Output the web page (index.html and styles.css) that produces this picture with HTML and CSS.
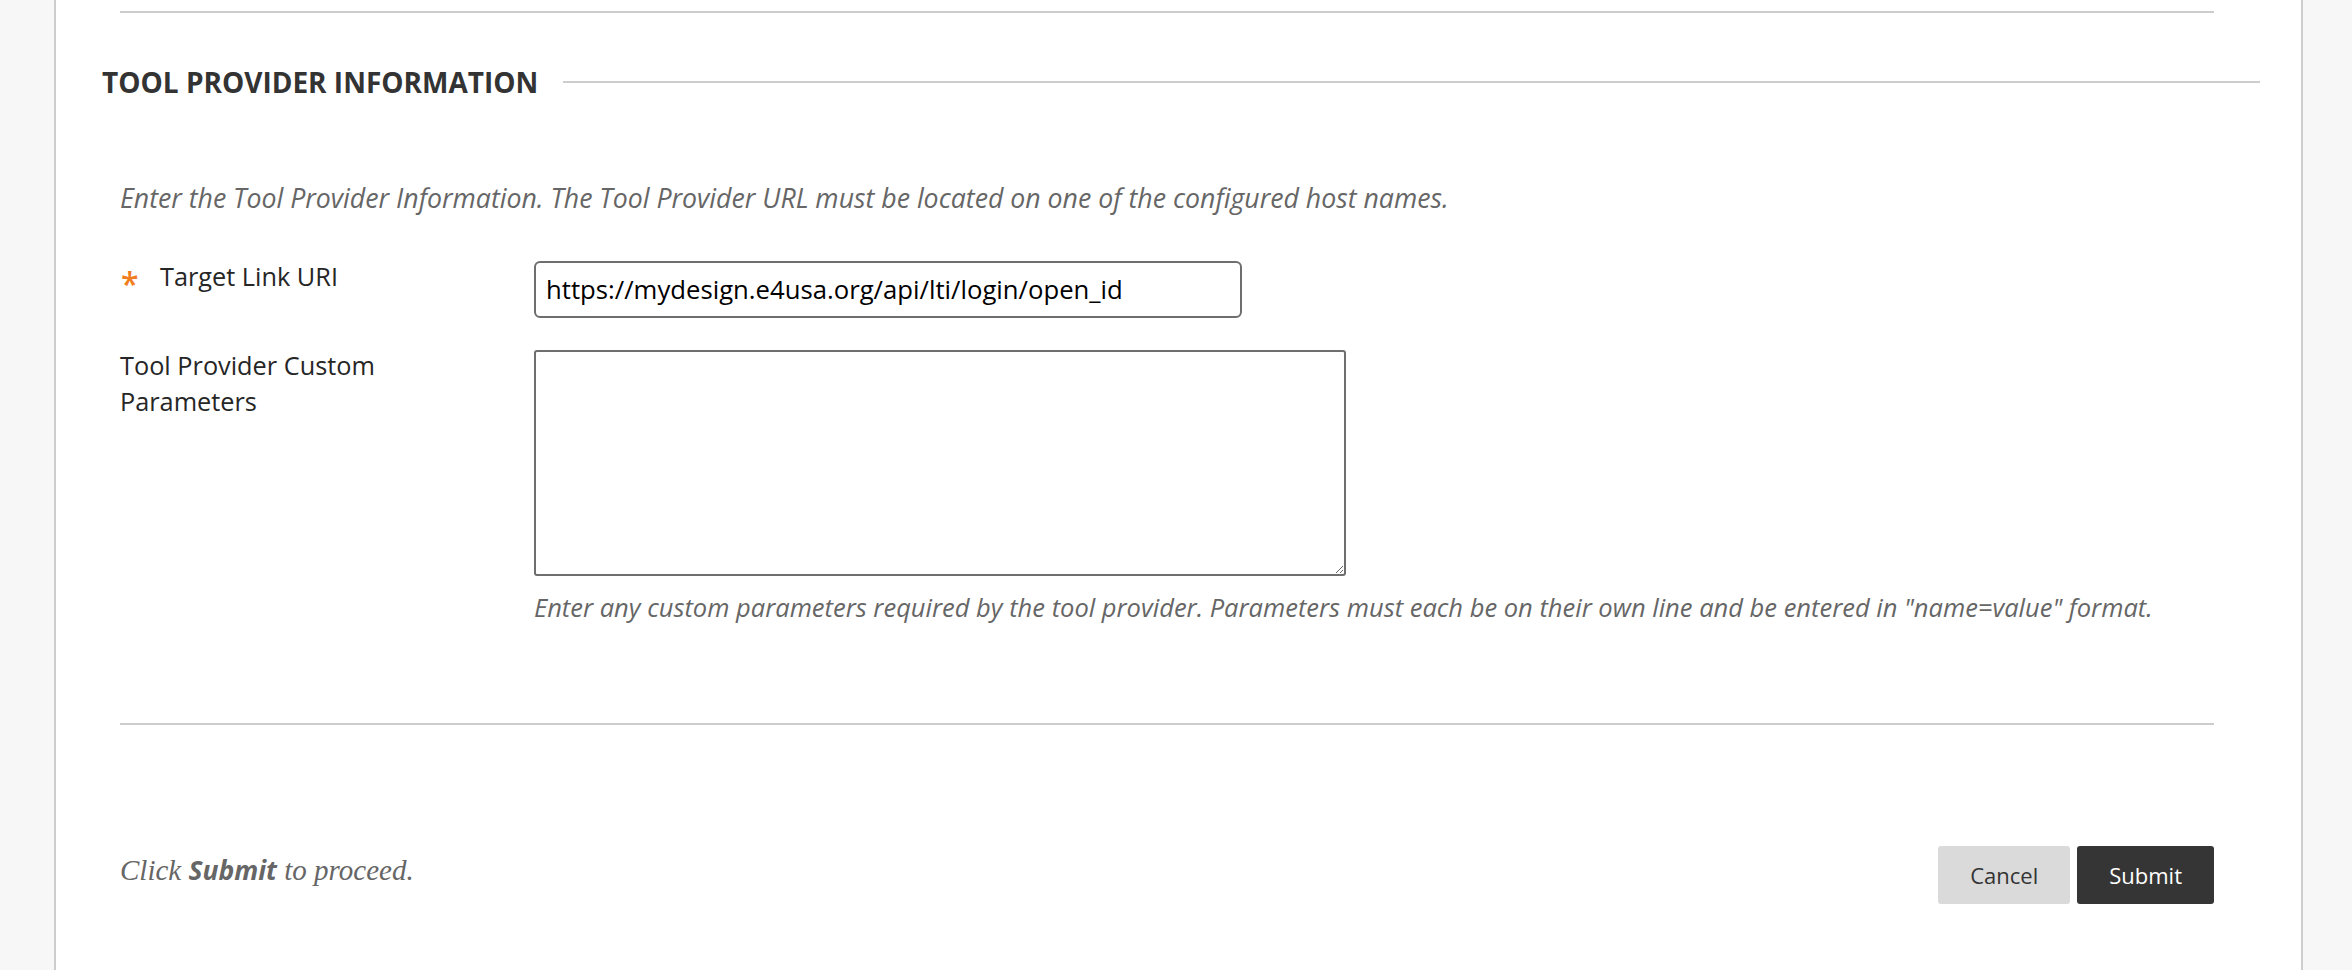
FILE: index.html
```html
<!DOCTYPE html>
<html lang="en">
<head>
<meta charset="utf-8">
<title>Tool Provider Information</title>
<link rel="stylesheet" href="styles.css">
</head>
<body>
<div class="page">
  <main class="panel">
    <hr class="rule rule-top">
    <section class="step">
      <h2 class="step-title"><span class="step-title-text">Tool Provider Information</span></h2>
      <p class="step-desc">Enter the Tool Provider Information. The Tool Provider URL must be located on one of the configured host names.</p>
      <div class="field-row">
        <label class="field-label" for="target"><span class="req">*</span>Target Link URI</label>
        <div class="field-control">
          <input id="target" class="text-input" type="text" value="https://mydesign.e4usa.org/api/lti/login/open_id">
        </div>
      </div>
      <div class="field-row field-row-area">
        <label class="field-label field-label-plain" for="params">Tool Provider Custom Parameters</label>
        <div class="field-control">
          <textarea id="params" class="text-area"></textarea>
          <p class="field-help">Enter any custom parameters required by the tool provider. Parameters must each be on their own line and be entered in "name=value" format.</p>
        </div>
      </div>
    </section>
    <hr class="rule rule-bottom">
    <div class="submit-bar">
      <p class="submit-hint">Click <strong>Submit</strong> to proceed.</p>
      <div class="buttons">
        <button class="btn btn-cancel" type="button">Cancel</button>
        <button class="btn btn-submit" type="button">Submit</button>
      </div>
    </div>
  </main>
</div>
</body>
</html>
```
FILE: styles.css
```css
* { box-sizing: border-box; }
html, body { margin: 0; padding: 0; }
body {
  background: #f7f7f7;
  font-family: "Open Sans", "Liberation Sans", sans-serif;
  color: #262626;
  height: 970px;
  overflow: hidden;
}
.page {
  padding-left: 54px;
  height: 970px;
}
.panel {
  width: 2249px;
  min-height: 970px;
  background: #fff;
  border-left: 2px solid #cdcdcd;
  border-right: 2px solid #cdcdcd;
  padding: 11px 87px 0 64px;
}
.rule {
  border: 0;
  border-top: 2px solid #cdcdcd;
  margin: 0;
  height: 0;
}
.step-title {
  display: flex;
  align-items: center;
  gap: 25px;
  margin: 51px -46px 0 -18px;
  font-size: 28px;
  line-height: 36px;
  font-weight: 700;
  text-transform: uppercase;
  color: #333;
}
.step-title::after {
  content: "";
  flex: 1;
  border-top: 2px solid #cdcdcd;
}
.step-desc {
  margin: 80px 0 0;
  font-size: 26.7px;
  line-height: 36px;
  font-style: italic;
  color: #666;
}
.field-row {
  display: grid;
  grid-template-columns: 414px 1fr;
  align-items: start;
  margin-top: 45px;
}
.field-row-area { margin-top: 32px; }
.field-label {
  margin-top: -3px;
  font-size: 25.3px;
  line-height: 36px;
  color: #262626;
  padding-right: 80px;
}
.req {
  display: inline-block;
  width: 40px;
  padding-left: 1px;
  color: #f07d1e;
  font-size: 32px;
  font-weight: 600;
  line-height: 36px;
  vertical-align: -10px;
}
.text-input {
  display: block;
  width: 708px;
  height: 57px;
  border: 2px solid #6e6e6e;
  border-radius: 6px;
  padding: 0 10px;
  font-family: "Open Sans", "Liberation Sans", sans-serif;
  font-size: 25.7px;
  color: #000;
  background: #fff;
}
.text-area {
  display: block;
  width: 812px;
  height: 226px;
  border: 2px solid #6e6e6e;
  border-radius: 3px;
  padding: 8px 10px;
  font-family: "Open Sans", "Liberation Sans", sans-serif;
  font-size: 25px;
  background: #fff;
  margin: 0;
}
.field-help {
  margin: 13px 0 0;
  font-size: 25.5px;
  line-height: 36px;
  font-style: italic;
  color: #666;
}
.rule-bottom { margin-top: 98px; }
.submit-bar {
  display: flex;
  justify-content: space-between;
  align-items: center;
  margin-top: 121px;
}
.submit-hint {
  margin: 0 0 10px;
  font-family: "Liberation Serif", "DejaVu Serif", serif;
  font-style: italic;
  font-size: 29px;
  line-height: 36px;
  color: #666;
}
.submit-hint strong {
  font-family: "Open Sans", "Liberation Sans", sans-serif;
  font-weight: 700;
  font-size: 26.5px;
}
.buttons {
  display: flex;
  gap: 7px;
}
.btn {
  height: 58px;
  padding: 0 32px;
  border: 0;
  border-radius: 3px;
  font-family: "Open Sans", "Liberation Sans", sans-serif;
  font-size: 22px;
}
.btn-cancel {
  background: #dadada;
  color: #333;
}
.btn-submit {
  background: #353535;
  color: #fff;
}
```
